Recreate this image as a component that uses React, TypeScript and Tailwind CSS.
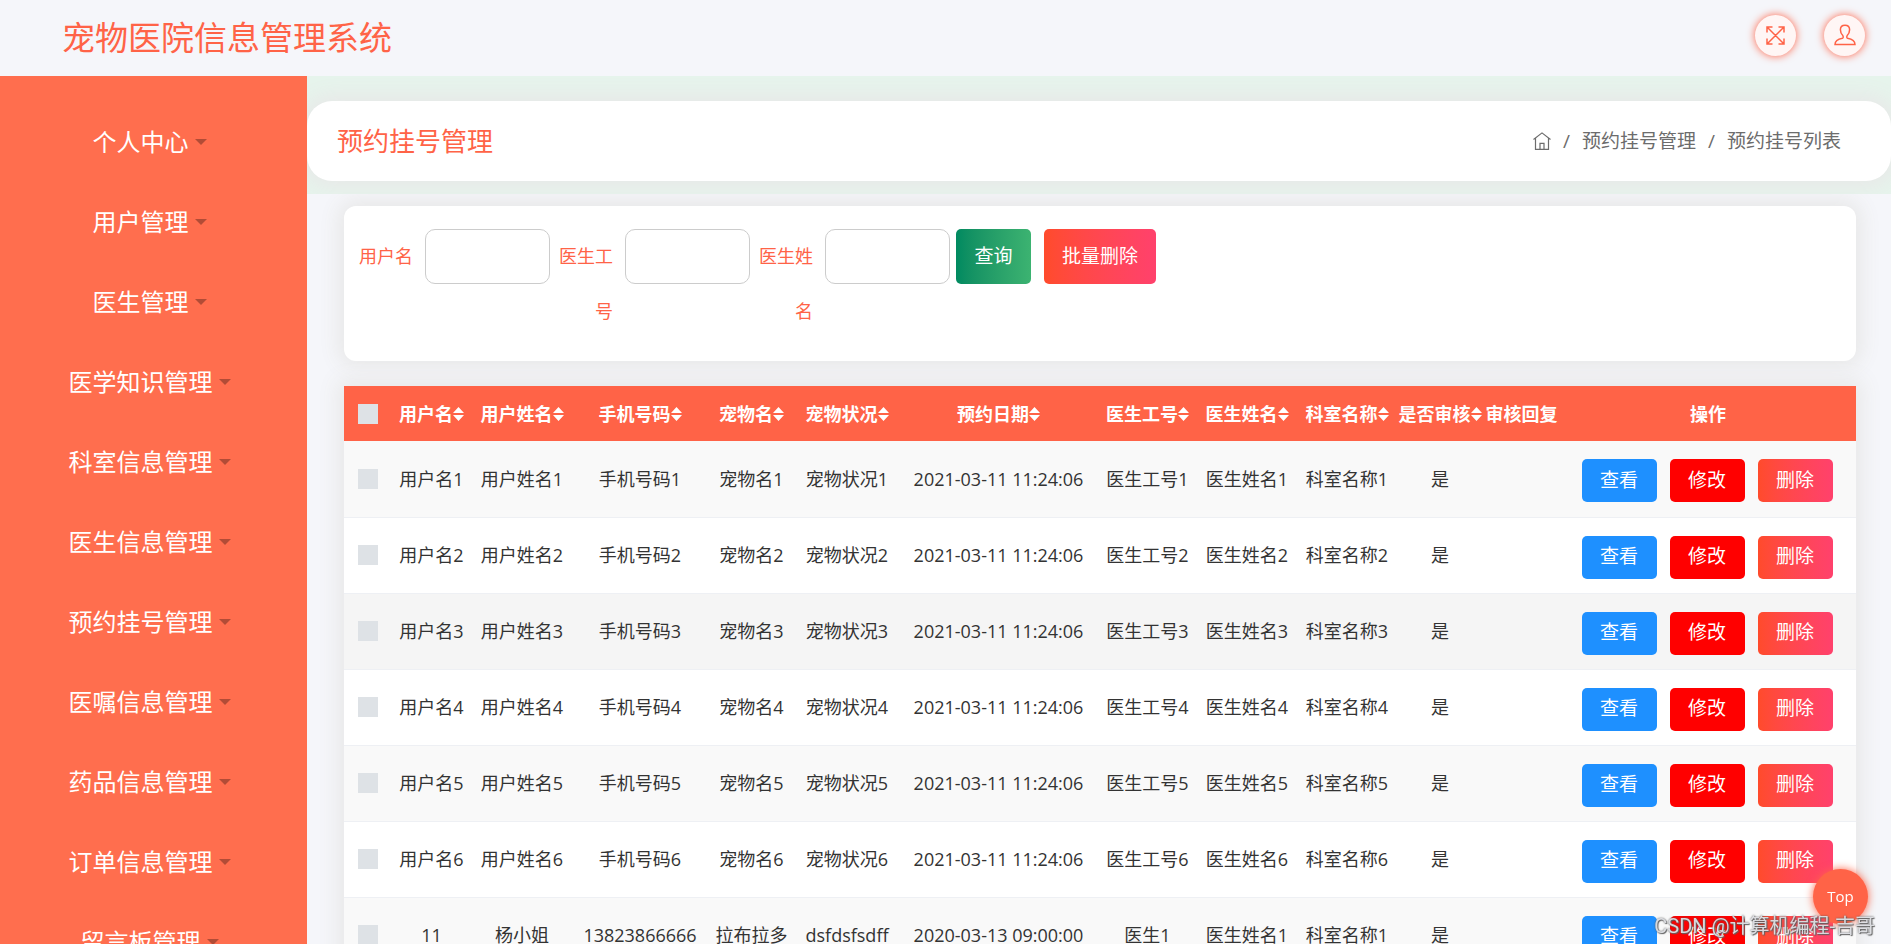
import clsx from 'clsx'

const MENU = [
  '个人中心',
  '用户管理',
  '医生管理',
  '医学知识管理',
  '科室信息管理',
  '医生信息管理',
  '预约挂号管理',
  '医嘱信息管理',
  '药品信息管理',
  '订单信息管理',
  '留言板管理',
]

const FILTERS = [
  { id: 'username', label: '用户名' },
  { id: 'doctorNo', label: '医生工号' },
  { id: 'doctorName', label: '医生姓名' },
]

const COLUMNS = [
  { label: '用户名', sortable: true, width: 'w-[81px]' },
  { label: '用户姓名', sortable: true, width: 'w-[100px]' },
  { label: '手机号码', sortable: true, width: 'w-[136px]' },
  { label: '宠物名', sortable: true, width: 'w-[87px]' },
  { label: '宠物状况', sortable: true, width: 'w-[104px]' },
  { label: '预约日期', sortable: true, width: 'w-[199px]' },
  { label: '医生工号', sortable: true, width: 'w-[99px]' },
  { label: '医生姓名', sortable: true, width: 'w-[100px]' },
  { label: '科室名称', sortable: true, width: 'w-[100px]' },
  { label: '是否审核', sortable: true, width: 'w-[86px]' },
  { label: '审核回复', sortable: false, width: 'w-[77px]' },
  { label: '操作', sortable: false, width: 'w-[296px]' },
]

const ROWS: string[][] = [
  ...[1, 2, 3, 4, 5, 6].map((n) => [
    `用户名${n}`,
    `用户姓名${n}`,
    `手机号码${n}`,
    `宠物名${n}`,
    `宠物状况${n}`,
    '2021-03-11 11:24:06',
    `医生工号${n}`,
    `医生姓名${n}`,
    `科室名称${n}`,
    '是',
    '',
  ]),
  [
    '11',
    '杨小姐',
    '13823866666',
    '拉布拉多',
    'dsfdsfsdff',
    '2020-03-13 09:00:00',
    '医生1',
    '医生姓名1',
    '科室名称1',
    '是',
    '',
  ],
]

const HIGHLIGHTED_ROW = 2

export default function App() {
  return (
    <div className="flex h-screen flex-col overflow-hidden bg-[#f5f6fa] font-['Open_Sans','Noto_Sans_CJK_SC',sans-serif] text-[#333]">
      <Header />
      <div className="flex min-h-0 flex-1">
        <Sidebar />
        <main className="min-w-0 flex-1 overflow-hidden">
          <Breadcrumb />
          <div className="pt-3 pr-[35px] pl-[37px]">
            <SearchCard />
            <AppointmentTable />
          </div>
        </main>
      </div>

      <button className="fixed right-[23px] bottom-5 size-[55px] rounded-full bg-[#ff6347] text-[15px] font-medium text-white shadow-[0_0_8px_#ff6347]">
        Top
      </button>
      <p className="pointer-events-none fixed right-4 bottom-1 font-['Roboto','Noto_Sans_CJK_SC',sans-serif] text-xl leading-7 text-gray-200/90 [text-shadow:0_0_2px_#555,1px_1px_1px_#666]">
        CSDN @计算机编程-吉哥
      </p>
    </div>
  )
}

// ─── Layout ───────────────────────────────────────────────────────────────────

function Header() {
  return (
    <header className="flex h-[76px] shrink-0 items-center justify-between pr-[26px] pl-[62px]">
      <h1 className="text-[33px] leading-[76px] text-[#ff6347]">宠物医院信息管理系统</h1>
      <div className="flex gap-7 pb-1.5">
        <RoundButton label="全屏">
          <FullscreenIcon />
        </RoundButton>
        <RoundButton label="用户">
          <UserIcon />
        </RoundButton>
      </div>
    </header>
  )
}

function RoundButton({ label, children }: { label: string; children: React.ReactNode }) {
  return (
    <button
      aria-label={label}
      className="flex size-[41px] items-center justify-center rounded-full bg-[#fff6f5] text-[#ff6347] shadow-[0_0_8px_#ff6347]"
    >
      {children}
    </button>
  )
}

function Sidebar() {
  return (
    <nav className="w-[307px] shrink-0 bg-[#ff6e4e] pt-[26px]">
      <ul>
        {MENU.map((item) => (
          <li key={item}>
            <a
              href="#"
              className="flex h-20 items-center justify-center gap-1.5 pr-2 text-2xl text-white"
            >
              {item}
              <span className="border-x-[6px] border-t-[6px] border-x-transparent border-t-black/30" />
            </a>
          </li>
        ))}
      </ul>
    </nav>
  )
}

function Breadcrumb() {
  return (
    <div className="relative z-10 overflow-hidden bg-[#e6f4ec] pt-[25px] pb-[13px]">
      <div className="flex h-20 items-center justify-between rounded-[25px] bg-white pr-[50px] pl-[30px] shadow-[0_0_20px_6px_#e8e8e8]">
        <h2 className="text-[26px] text-[#ff6347]">预约挂号管理</h2>
        <ol className="flex items-center gap-3 text-[19px] text-[#6c6c6c]">
          <li>
            <a href="#" aria-label="首页">
              <HomeIcon />
            </a>
          </li>
          <li>/</li>
          <li>
            <a href="#">预约挂号管理</a>
          </li>
          <li>/</li>
          <li>预约挂号列表</li>
        </ol>
      </div>
    </div>
  )
}

// ─── Content ──────────────────────────────────────────────────────────────────

function SearchCard() {
  return (
    <form className="flex items-start rounded-xl bg-white pt-[23px] pb-[22px] pl-1.5 shadow-[0_0_20px_6px_#e8e8e8]">
      {FILTERS.map(({ id, label }) => (
        <div key={id} className="flex w-[200px] items-start gap-3">
          <label
            htmlFor={id}
            className="w-[63px] text-right text-lg leading-[55px] text-[#ff6347]"
          >
            {label}
          </label>
          <input
            id={id}
            type="text"
            className="h-[55px] w-[125px] rounded-[10px] border border-[#ccc] bg-white px-3 outline-none"
          />
        </div>
      ))}
      <button
        type="button"
        className="ml-1.5 h-[55px] w-[75px] rounded-[5px] bg-linear-to-r from-[#008a60] to-[#3cb371] text-[19px] text-white"
      >
        查询
      </button>
      <button
        type="button"
        className="ml-[13px] h-[55px] rounded-[5px] bg-linear-to-r from-[#ff4b2b] to-[#ff416c] px-[18px] text-[19px] text-white"
      >
        批量删除
      </button>
    </form>
  )
}

function AppointmentTable() {
  return (
    <table className="mt-[25px] w-full table-fixed border-collapse text-center text-lg whitespace-nowrap shadow-[0_0_20px_6px_#e8e8e8]">
      <thead>
        <tr className="h-[55px] bg-[#ff6347] text-white">
          <th className="w-[47px]">
            <Tick label="全选" />
          </th>
          {COLUMNS.map((col) => (
            <th key={col.label} className={clsx('p-0', col.width)}>
              <span className="inline-flex items-center">
                {col.label}
                {col.sortable && <SortIcon />}
              </span>
            </th>
          ))}
        </tr>
      </thead>
      <tbody>
        {ROWS.map((row, i) => (
          <tr
            key={row[0]}
            className={clsx(
              'h-[76px] border-b border-[#eef0f4]',
              i === HIGHLIGHTED_ROW ? 'bg-[#f5f5f5]' : 'bg-white odd:bg-[#f9f9f9]',
            )}
          >
            <td>
              <Tick label={`选择${row[0]}`} />
            </td>
            {row.map((cell, j) => (
              <td key={j}>{cell}</td>
            ))}
            <td>
              <div className="flex justify-center gap-[13px] pt-1 pr-0.5">
                <RowButton className="bg-[#1e90ff]">查看</RowButton>
                <RowButton className="bg-[#ff0000]">修改</RowButton>
                <RowButton className="bg-linear-to-r from-[#ff4b2b] to-[#ff416c]">删除</RowButton>
              </div>
            </td>
          </tr>
        ))}
      </tbody>
    </table>
  )
}

function RowButton({ className, children }: { className: string; children: React.ReactNode }) {
  return (
    <button className={clsx('h-[43px] w-[75px] rounded-[5px] text-[19px] text-white', className)}>
      {children}
    </button>
  )
}

function Tick({ label }: { label: string }) {
  return (
    <input
      type="checkbox"
      aria-label={label}
      className="mx-auto block size-5 appearance-none bg-[#dee2e6] checked:bg-[#1e90ff]"
    />
  )
}

// ─── Icons ────────────────────────────────────────────────────────────────────

function SortIcon() {
  return (
    <svg width="11" height="16" viewBox="0 0 11 16" fill="currentColor" aria-hidden="true">
      <path d="M5.5 1 11 7H0zM5.5 15 0 9h11z" />
    </svg>
  )
}

function FullscreenIcon() {
  return (
    <svg width="19" height="19" viewBox="0 0 19 19" fill="none" stroke="currentColor" strokeWidth="1.5" aria-hidden="true">
      <path d="M1 1l17 17M18 1L1 18M1 6.500V1h5.500M12.500 1H18v5.500M18 12.500V18h-5.500M6.500 18H1v-5.500" />
    </svg>
  )
}

function UserIcon() {
  return (
    <svg width="22" height="22" viewBox="0 0 22 22" fill="none" stroke="currentColor" strokeWidth="1.5" aria-hidden="true">
      <path d="M1 20.500c0-3.400 3-5.400 7.500-6.200.9-.3.900-1.700.3-2.700C7.300 10 6.400 8 6.400 5.700 6.400 3 8.200 1.200 11 1.200s4.600 1.800 4.600 4.500c0 2.300-.9 4.300-2.400 5.900-.6 1-.6 2.400.3 2.700 4.500.8 7.500 2.800 7.500 6.200z" />
    </svg>
  )
}

function HomeIcon() {
  return (
    <svg width="18" height="18" viewBox="0 0 18 18" fill="none" stroke="currentColor" strokeWidth="1.200" aria-hidden="true">
      <path d="M.5 7.500 9 .9l8.500 6.600M2.500 6v11.400h13V6M7 17.400v-6h4v6" />
    </svg>
  )
}
